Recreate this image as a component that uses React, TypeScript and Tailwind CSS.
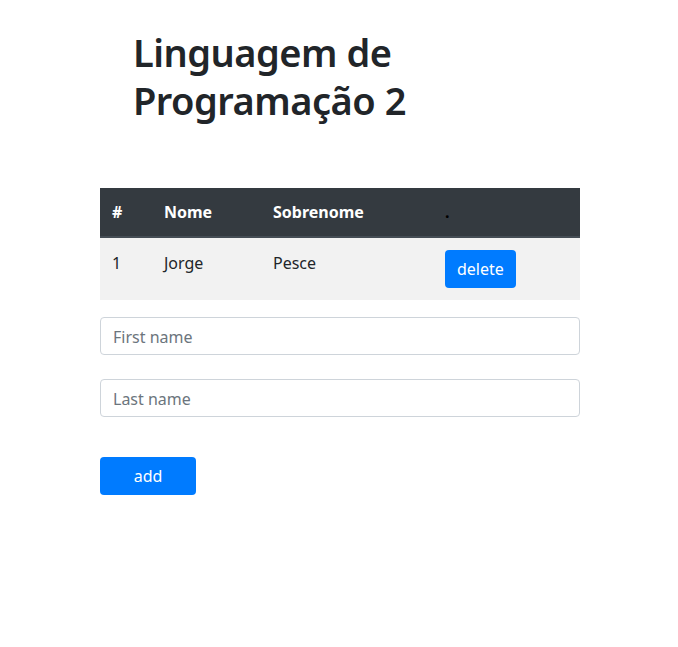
import { useState } from "react";

type Person = { id: number; first: string; last: string };

export default function App() {
  const [people, setPeople] = useState<Person[]>([{ id: 1, first: "Jorge", last: "Pesce" }]);
  const [first, setFirst] = useState("");
  const [last, setLast] = useState("");

  const handleAdd = () => {
    if (!first && !last) return;
    setPeople([...people, { id: people.length + 1, first, last }]);
    setFirst("");
    setLast("");
  };

  const handleDelete = (id: number) => {
    setPeople(people.filter((p) => p.id !== id));
  };

  return (
    <div className="min-h-screen bg-white text-[#212529] font-['Noto_Sans',sans-serif]">
      <div className="w-[480px] ml-[100px] pt-[28px]">
        <h1 className="ml-[33px] w-[300px] text-[38px] leading-[48px] font-semibold tracking-[-0.5px]">
          Linguagem de Programação 2
        </h1>

        <table className="w-full mt-[64px] text-base border-collapse">
          <thead>
            <tr className="bg-[#343a40] text-white text-left">
              <th className="w-[52px] p-3 border-b-2 border-[#454d55] font-bold">#</th>
              <th className="w-[109px] p-3 border-b-2 border-[#454d55] font-bold">Nome</th>
              <th className="w-[172px] p-3 border-b-2 border-[#454d55] font-bold">Sobrenome</th>
              <th className="p-3 border-b-2 border-[#454d55] font-bold text-black">.</th>
            </tr>
          </thead>
          <tbody>
            {people.map((p, i) => (
              <tr key={p.id} className={i % 2 === 0 ? "bg-[#f2f2f2]" : "bg-white"}>
                <td className="pt-[13px] px-3 pb-3 align-top border-t border-[#dee2e6]">{p.id}</td>
                <td className="pt-[13px] px-3 pb-3 align-top border-t border-[#dee2e6]">{p.first}</td>
                <td className="pt-[13px] px-3 pb-3 align-top border-t border-[#dee2e6]">{p.last}</td>
                <td className="p-3 align-top border-t border-[#dee2e6]">
                  <button
                    onClick={() => handleDelete(p.id)}
                    className="h-[38px] px-3 rounded bg-[#007bff] text-white"
                  >
                    delete
                  </button>
                </td>
              </tr>
            ))}
          </tbody>
        </table>

        <div className="mt-[17px] flex flex-col gap-6">
          <input
            type="text"
            placeholder="First name"
            value={first}
            onChange={(e) => setFirst(e.target.value)}
            className="w-full h-[38px] px-3 pt-px border border-[#ced4da] rounded placeholder-[#6c757d] outline-none"
          />
          <input
            type="text"
            placeholder="Last name"
            value={last}
            onChange={(e) => setLast(e.target.value)}
            className="w-full h-[38px] px-3 pt-px border border-[#ced4da] rounded placeholder-[#6c757d] outline-none"
          />
        </div>

        <button
          onClick={handleAdd}
          className="mt-10 w-[96px] h-[38px] rounded bg-[#007bff] text-white"
        >
          add
        </button>
      </div>
    </div>
  );
}
